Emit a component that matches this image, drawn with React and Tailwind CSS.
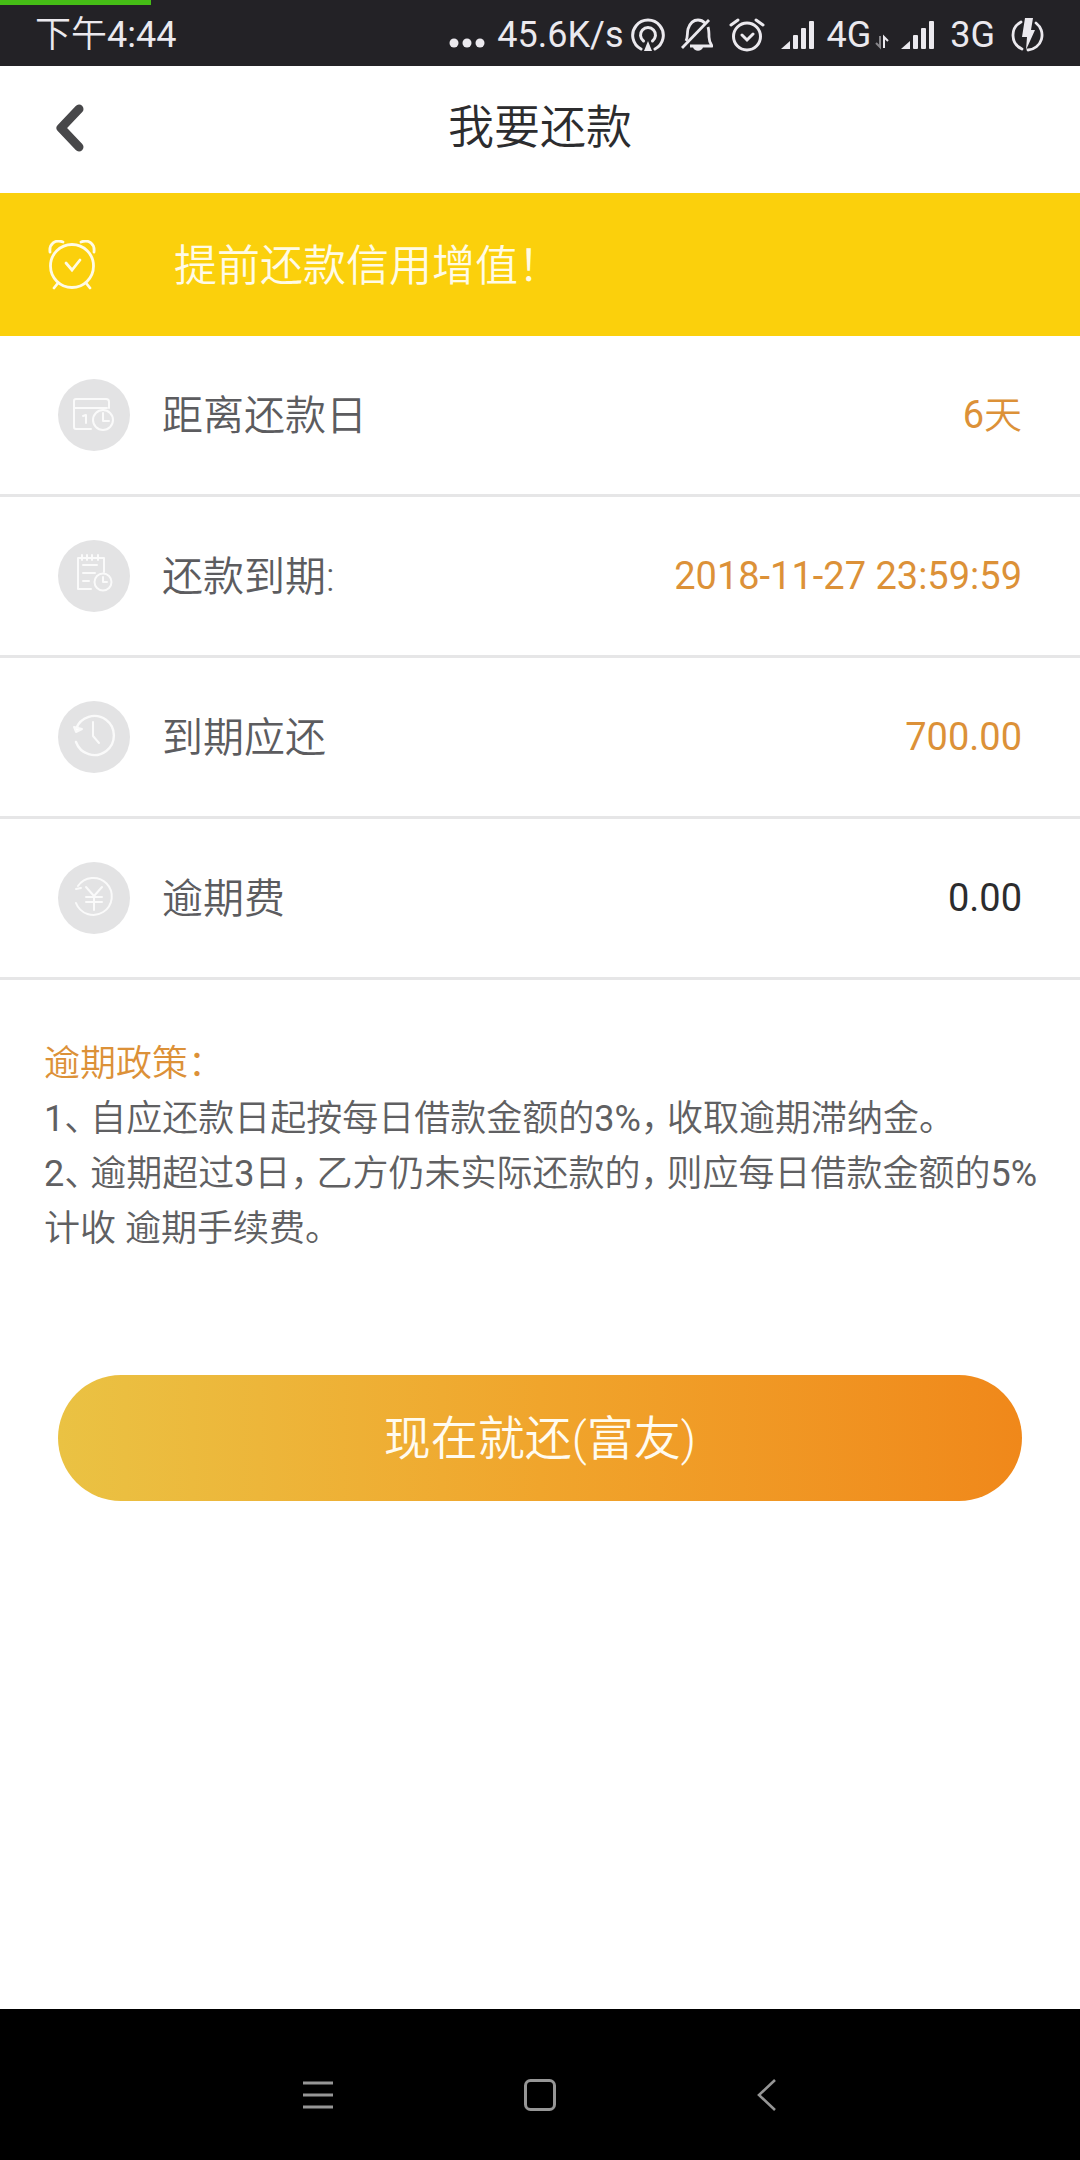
import { useState } from "react";

const AlarmIcon = () => (
    <svg className="w-12 h-[50px]" viewBox="0 0 48 50" fill="none" stroke="#fffbe6" strokeWidth="2.8" strokeLinecap="round">
        <circle cx="24" cy="26" r="21.5" />
        <path d="M18 23l6 7 8-10" />
        <path d="M2 12C1 4 7-1 15 2M46 12c1-8-5-13-13-10M10 43l-4 5M38 43l4 5" />
    </svg>
);

const CalendarIcon = () => (
    <>
        <path d="M33 50H18a2 2 0 0 1-2-2V22a2 2 0 0 1 2-2h30a3 3 0 0 1 3 3v6M16 29h33" />
        <path d="M25 37l3-1v8" />
        <circle cx="45" cy="41" r="10" />
        <path d="M45 34v8h6" />
    </>
);

const NotebookIcon = () => (
    <>
        <path d="M33 49H20V18h26v14M24 15v5M29 15v5M34 15v5M40 15v5" />
        <path d="M25 25h14M25 33h12M25 41h6" />
        <circle cx="45" cy="42" r="8.5" />
        <path d="M45 37v5h4" />
    </>
);

const HistoryIcon = () => (
    <>
        <path d="M18 28A19.5 19.5 0 1 1 18 41" strokeWidth="2.4" />
        <path d="M16 26l2 5 6-3z" fill="#fff" />
        <path d="M35 21v14l6 7" />
    </>
);

const YuanIcon = () => (
    <>
        <path d="M20 24A18.5 18.5 0 1 1 18 41" />
        <path d="M18 27l5-1" />
        <path d="M28 25l8 9 8-9M28 35h16M28 40h16M36 34v14" />
    </>
);

const Badge = ({ children }) => (
    <svg className="w-[72px] h-[72px] shrink-0" viewBox="0 0 72 72" fill="none" stroke="#fafafa" strokeWidth="2" strokeLinecap="round" strokeLinejoin="round">
        <circle cx="36" cy="36" r="36" fill="#e3e3e4" stroke="none" />
        {children}
    </svg>
);

const Signal = () => (
    <svg className="w-[33px] h-[30px]" viewBox="0 0 33 30" fill="currentColor">
        <path d="M0 29l9-8v8z" />
        <rect x="12" y="15" width="5" height="14" rx="1" />
        <rect x="20" y="8" width="5" height="21" rx="1" />
        <rect x="28" y="1" width="5" height="28" rx="1" />
    </svg>
);

const StatusBar = () => (
    <div className="relative flex items-center justify-between h-[66px] px-[35px] pt-1 bg-[#232226] text-[#ebe9ee] text-[36px] leading-none">
        {/* download progress */}
        <div className="absolute left-0 top-0 h-[5px] w-[14%] bg-[#45bd16]" />
        <span>下午4:44</span>
        <div className="flex items-center">
            <svg className="w-9 h-[34px] mr-3" viewBox="0 0 36 34" fill="currentColor">
                <circle cx="5" cy="25" r="4.5" />
                <circle cx="18" cy="25" r="4.5" />
                <circle cx="31" cy="25" r="4.5" />
            </svg>
            <span>45.6K/s</span>
            <svg className="w-[34px] h-[34px] ml-2 mr-4" viewBox="0 0 34 34" fill="none" stroke="currentColor" strokeWidth="3" strokeLinecap="round">
                <path d="M10 31A15.3 15.3 0 1 1 24 31" />
                <path d="M12.5 23A7.5 7.5 0 1 1 21.5 23" />
                <path d="M17 23l4 10h-8z" fill="currentColor" stroke="none" />
            </svg>
            <svg className="w-8 h-[34px] mr-4" viewBox="0 0 32 34" fill="none" stroke="currentColor" strokeWidth="2.8" strokeLinejoin="round">
                <path d="M28 2L1 30" />
                <path d="M5 23c2-4 1-8 2-12C9 5 13 2 17 2c3 0 5 1 7 3M27 9c1 3 1 7 1 10 0 4 1 6 3 9H9" />
                <path d="M12 29h10c-1 5-9 5-10 0z" fill="currentColor" stroke="none" />
            </svg>
            <svg className="w-9 h-[34px] mr-4" viewBox="0 0 36 34" fill="none" stroke="currentColor" strokeWidth="3" strokeLinecap="round">
                <circle cx="18" cy="18.5" r="13.5" />
                <path d="M13 17l5 5 6-6M2 7l7-5M34 7l-7-5" />
            </svg>
            <Signal />
            <span className="ml-3">4G</span>
            <svg className="w-[14px] h-[34px] mr-3 ml-1" viewBox="0 0 14 34" fill="none" stroke="currentColor" strokeWidth="2">
                <path d="M5 18v11l-4-4" opacity=".5" />
                <path d="M9 30V19l4 4" />
            </svg>
            <Signal />
            <span className="ml-4">3G</span>
            <svg className="w-[34px] h-[36px] ml-4" viewBox="0 0 34 36" fill="none" stroke="currentColor" strokeWidth="2.8">
                <path d="M10 5A15 15 0 0 0 11 32M25 6a15 15 0 0 1-8 27" strokeLinecap="round" />
                <path d="M14 1h8l-2 12h4L15 33l1-13h-5z" fill="currentColor" stroke="none" />
            </svg>
        </div>
    </div>
);

// mid-sentence punctuation, half-width form
const Mark = ({ children }) => <span className="pr-2 [font-feature-settings:'halt']">{children}</span>;

const rows = [
    { label: "距离还款日", value: "6天", icon: <CalendarIcon />, color: "text-[#dc9138]" },
    { label: "还款到期:", value: "2018-11-27 23:59:59", icon: <NotebookIcon />, color: "text-[#dc9138]" },
    { label: "到期应还", value: "700.00", icon: <HistoryIcon />, color: "text-[#dc9138]" },
    { label: "逾期费", value: "0.00", icon: <YuanIcon />, color: "text-[#2c2c2e]" },
];

const App = () => {
    const [paying, setPaying] = useState(false);

    return (
        <div className="min-h-screen flex flex-col bg-white font-[Roboto,'Noto_Sans_CJK_SC_DemiLight','Noto_Sans_CJK_SC',sans-serif]">
            <StatusBar />
            <header className="grid grid-cols-[1fr_auto_1fr] items-center h-[127px] px-14 pb-1">
                <button type="button" aria-label="返回" className="justify-self-start">
                    <svg className="w-7 h-12" viewBox="0 0 28 48" fill="none" stroke="#48484a" strokeWidth="9" strokeLinecap="round" strokeLinejoin="round">
                        <path d="M23 5L5 24l18 19" />
                    </svg>
                </button>
                <h1 className="pb-0.5 text-[46px] leading-none font-[350] text-[#2c2c2e]">我要还款</h1>
            </header>
            <div className="flex items-center gap-[78px] h-[143px] px-12 bg-[#fbd00c] text-[#fffbe6]">
                <AlarmIcon />
                <p className="pt-1 text-[43px] leading-none font-[350]">提前还款信用增值！</p>
            </div>
            <main className="flex-1 pb-16">
                <dl>
                    {rows.map((row) => (
                        <div key={row.label} className="flex items-center h-[161px] px-[58px] border-b-3 border-[#e6e6e7]">
                            <Badge>{row.icon}</Badge>
                            <dt className="ml-8 pt-0.5 text-[41px] leading-none font-[350] text-[#5c5c5f]">{row.label}</dt>
                            <dd className={`ml-auto text-[38px] leading-none ${row.color}`}>{row.value}</dd>
                        </div>
                    ))}
                </dl>
                <section className="mt-[57px] pl-11 pr-8 text-[36px] leading-[55px] text-[#606062]">
                    <h2 className="font-[350] text-[#dc9138]">逾期政策：</h2>
                    <p>1<Mark>、</Mark>自应还款日起按每日借款金额的3%<Mark>，</Mark>收取逾期滞纳金。</p>
                    <p>2<Mark>、</Mark>逾期超过3日<Mark>，</Mark>乙方仍未实际还款的<Mark>，</Mark>则应每日借款金额的5%计收 逾期手续费。</p>
                </section>
                <div className="mt-[118px] px-[58px]">
                    <button
                        type="button"
                        disabled={paying}
                        onClick={() => setPaying(true)}
                        className="w-full h-[126px] rounded-full bg-linear-to-r from-[#eac243] via-[#f0a52c] to-[#f0881a] text-[47px] leading-none font-[350] text-[#fffbf0]"
                    >
                        现在就还(富友)
                    </button>
                </div>
            </main>
            <nav className="flex justify-center gap-[190px] h-[151px] pt-[70px] bg-black">
                <button type="button" aria-label="菜单" className="h-8">
                    <svg className="w-8 h-8" viewBox="0 0 32 32" stroke="#969696" strokeWidth="3">
                        <path d="M1 4h30M1 16h30M1 28h30" />
                    </svg>
                </button>
                <button type="button" aria-label="主页" className="h-8">
                    <svg className="w-8 h-8" viewBox="0 0 32 32" fill="none" stroke="#969696" strokeWidth="3">
                        <rect x="1.5" y="1.5" width="29" height="29" rx="5" />
                    </svg>
                </button>
                <button type="button" aria-label="后退" className="h-8">
                    <svg className="w-8 h-8" viewBox="0 0 32 32" fill="none" stroke="#969696" strokeWidth="2.6">
                        <path d="M29 1L13 16l16 15" />
                    </svg>
                </button>
            </nav>
        </div>
    );
};
export default App;
